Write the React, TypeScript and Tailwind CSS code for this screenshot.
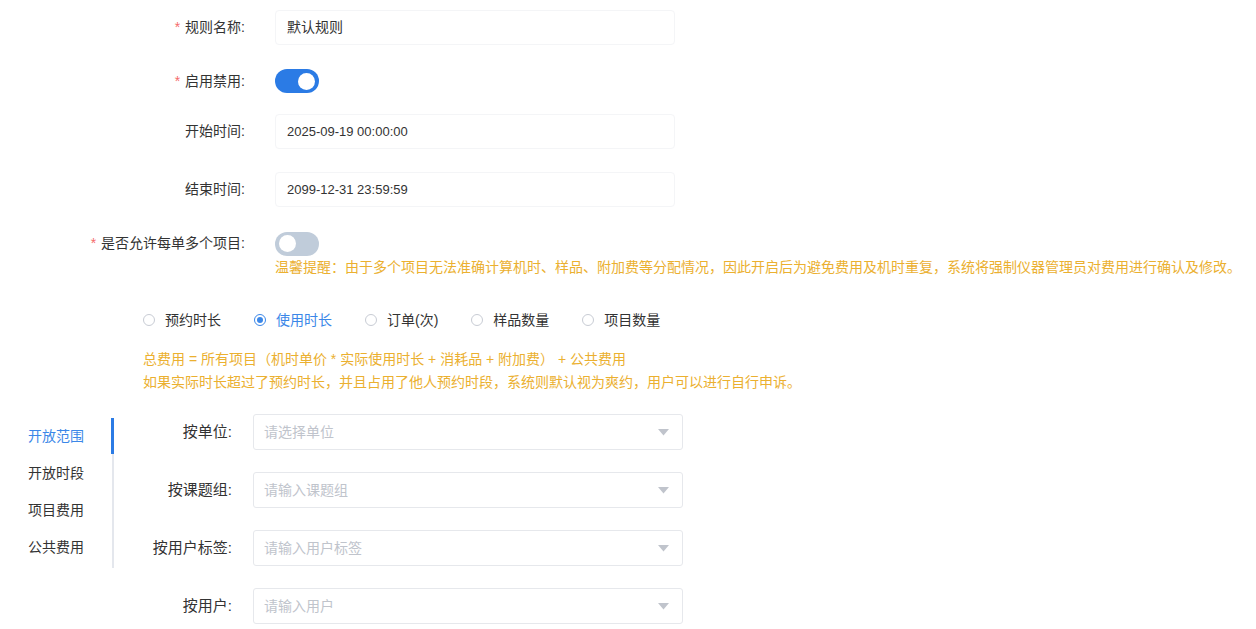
import React from "react";

const FONT = { fontFamily: '"Liberation Sans", "Noto Sans CJK SC", sans-serif' };

function Star() {
  return <span className="text-[#f56c6c] mr-[5px]">*</span>;
}

function Label({ children, star }: { children: React.ReactNode; star?: boolean }) {
  return (
    <div className="w-[246px] shrink-0 text-right text-[14px] text-[#333] pr-[1px]">
      {star && <Star />}
      {children}
    </div>
  );
}

function Switch({ on }: { on: boolean }) {
  return (
    <div
      className={
        "w-[44px] h-[24px] rounded-full flex items-center px-[4px] " +
        (on ? "bg-[#2b7be5] justify-end" : "bg-[#c0ccda] justify-start")
      }
    >
      <div className="w-[17px] h-[17px] rounded-full bg-white" />
    </div>
  );
}

function TextBox({ value, mono }: { value: string; mono?: boolean }) {
  return (
    <div className="w-[400px] h-[35px] ml-[29px] rounded-[4px] border border-[#f4f5f7] flex items-center pl-[11px]">
      <span className={mono ? "text-[13px] text-[#333]" : "text-[14px] text-[#333]"}>{value}</span>
    </div>
  );
}

function Radio({ label, checked }: { label: string; checked?: boolean }) {
  return (
    <div className="flex items-center mr-[33px]">
      <div
        className={
          "w-[12px] h-[12px] rounded-full border flex items-center justify-center " +
          (checked ? "border-[#3b87e8]" : "border-[#c8ccd4]")
        }
      >
        {checked && <div className="w-[6px] h-[6px] rounded-full bg-[#3b87e8]" />}
      </div>
      <span className={"ml-[10px] text-[14px] " + (checked ? "text-[#3b87e8]" : "text-[#333]")}>{label}</span>
    </div>
  );
}

function SelectRow({ label, placeholder }: { label: string; placeholder: string }) {
  return (
    <div className="flex items-center h-[36px] mb-[22px]">
      <div className="w-[118px] text-right text-[15px] text-[#333]">{label}</div>
      <div className="ml-[21px] w-[430px] h-[36px] border border-[#e6e8ec] rounded-[3px] flex items-center justify-between pl-[10px] pr-[13px]">
        <span className="text-[14px] text-[#c0c4cc]">{placeholder}</span>
        <svg width="11" height="7" viewBox="0 0 11 7">
          <path d="M0 0 L11 0 L5.5 6.5 Z" fill="#c0c4cc" />
        </svg>
      </div>
    </div>
  );
}

export default function App() {
  return (
    <div className="w-[1256px] h-[629px] bg-white overflow-hidden" style={FONT}>
      {/* Top form */}
      <div className="flex items-center h-[35px] mt-[10px]">
        <Label star>规则名称:</Label>
        <TextBox value="默认规则" />
      </div>
      <div className="flex items-center h-[36px] mt-[18px]">
        <Label star>启用禁用:</Label>
        <div className="ml-[29px]">
          <Switch on />
        </div>
      </div>
      <div className="flex items-center h-[35px] mt-[15px]">
        <Label>开始时间:</Label>
        <TextBox value="2025-09-19 00:00:00" mono />
      </div>
      <div className="flex items-center h-[35px] mt-[23px]">
        <Label>结束时间:</Label>
        <TextBox value="2099-12-31 23:59:59" mono />
      </div>
      <div className="flex items-center h-[23px] mt-[25px]">
        <Label star>是否允许每单多个项目:</Label>
        <div className="ml-[29px]">
          <Switch on={false} />
        </div>
      </div>
      <div className="ml-[275px] mt-[3px] leading-[18px] text-[14px] text-[#ebb030] whitespace-nowrap">
        温馨提醒：由于多个项目无法准确计算机时、样品、附加费等分配情况，因此开启后为避免费用及机时重复，系统将强制仪器管理员对费用进行确认及修改。
      </div>

      {/* Radios */}
      <div className="flex items-center ml-[143px] mt-[34px] h-[20px]">
        <Radio label="预约时长" />
        <Radio label="使用时长" checked />
        <Radio label="订单(次)" />
        <Radio label="样品数量" />
        <Radio label="项目数量" />
      </div>

      <div className="ml-[143px] mt-[18px] text-[14px] leading-[23px] text-[#ebb030] whitespace-nowrap">
        <div>总费用 = 所有项目（机时单价 * 实际使用时长 + 消耗品 + 附加费） + 公共费用</div>
        <div>如果实际时长超过了预约时长，并且占用了他人预约时段，系统则默认视为爽约，用户可以进行自行申诉。</div>
      </div>

      {/* Bottom section */}
      <div className="flex mt-[19px]">
        <div className="w-[114px] shrink-0 pt-[5px]">
          <div className="flex flex-col border-r-2 border-[#e4e7ed] pb-[2px]">
            {["开放范围", "开放时段", "项目费用", "公共费用"].map((t, i) => (
              <div key={t} className="relative h-[37px] flex items-center pl-[28px]">
                <span className={"text-[14px] " + (i === 0 ? "text-[#3b87e8]" : "text-[#333]")}>{t}</span>
                {i === 0 && <div className="absolute right-[-2px] top-0 w-[3px] h-[36px] bg-[#2b7be5]" />}
              </div>
            ))}
          </div>
        </div>
        <div className="flex flex-col pt-[1px]">
          <SelectRow label="按单位:" placeholder="请选择单位" />
          <SelectRow label="按课题组:" placeholder="请输入课题组" />
          <SelectRow label="按用户标签:" placeholder="请输入用户标签" />
          <SelectRow label="按用户:" placeholder="请输入用户" />
        </div>
      </div>
    </div>
  );
}
